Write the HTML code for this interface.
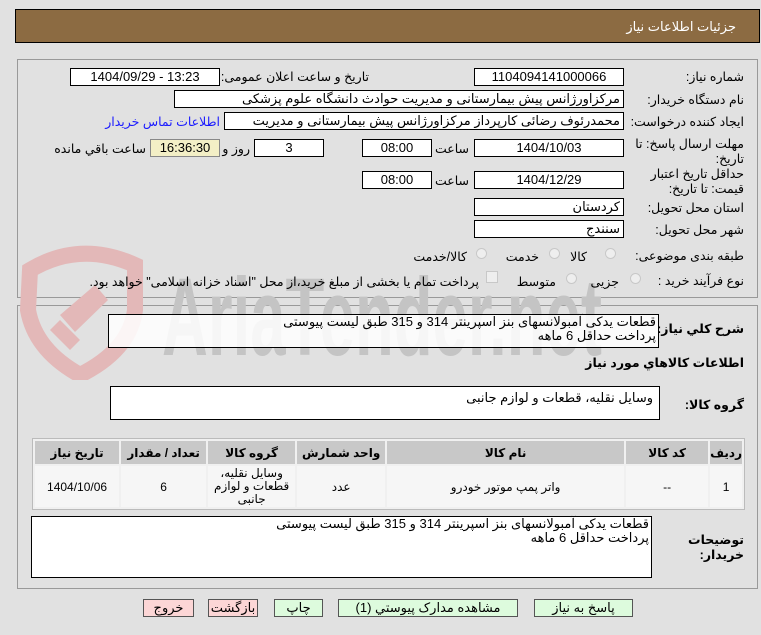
<!DOCTYPE html>
<html><head><meta charset="utf-8"><style>
body{margin:0;width:761px;height:635px;background:#e1e1e1;font-family:"Liberation Sans","DejaVu Sans",sans-serif;font-size:12px;color:#000;position:relative;overflow:hidden}
.a{position:absolute;white-space:nowrap}
.b{position:absolute;background:#fff;border:1px solid #000;box-sizing:border-box;text-align:center;line-height:16px;font-size:13px}
.l{position:absolute;direction:rtl;text-align:right;white-space:nowrap;font-size:12.5px}
.r{position:absolute;width:11px;height:11px;border-radius:50%;border:1px solid #c8c8c8;background:#eee;box-sizing:border-box}
.btn{position:absolute;top:599px;height:18px;border:1px solid #555;box-sizing:border-box;text-align:center;line-height:16px;font-size:13px}
table{border-collapse:separate;border-spacing:2px;position:absolute;left:32px;top:438px;width:713px;background:#f0f0f0;border:1px solid #bbb;direction:rtl}
th{background:#c8c8c8;height:23px;font-size:12px;font-weight:bold;padding:0}
td{background:#f6f6f6;height:41px;text-align:center;font-size:12px;padding:0}
</style></head><body>
<div class="a" style="left:15px;top:9px;width:745px;height:34px;background:#8c6b42;border:1px solid #000;box-sizing:border-box"></div>
<div class="l" style="right:25px;top:19px;color:#fff;font-size:13px">جزئیات اطلاعات نیاز</div>
<div class="a" style="left:17px;top:59px;width:741px;height:239px;border:1px solid #999;box-sizing:border-box"></div>
<div class="a" style="left:17px;top:305px;width:741px;height:284px;border:1px solid #999;box-sizing:border-box"></div>
<svg class="a" style="left:0;top:240px" width="620" height="140">
<path d="M30 30 Q80 0 135 25 L135 70 Q130 110 80 135 Q35 110 28 70 Z" fill="none" stroke="#e3b8b8" stroke-width="16"/>
<path d="M60 75 L95 45 L108 60 L75 92 Z M50 90 L70 110 L80 100 L60 80Z" fill="#e3b8b8"/>
<text x="162" y="115" font-size="110" font-weight="bold" fill="#c4c4c4" font-family="Liberation Sans" textLength="440" lengthAdjust="spacingAndGlyphs">AriaTender.net</text>
</svg>
<div class="l" style="right:17px;top:69px">شماره نیاز:</div>
<div class="b" style="left:474px;top:68px;width:150px;height:18px">1104094141000066</div>
<div class="l" style="right:392px;top:69px">تاریخ و ساعت اعلان عمومی:</div>
<div class="b" style="left:70px;top:68px;width:150px;height:18px">1404/09/29 - 13:23</div>
<div class="l" style="right:17px;top:92px">نام دستگاه خریدار:</div>
<div class="b" style="left:174px;top:90px;width:450px;height:18px;text-align:right;padding-right:3px;direction:rtl">مرکزاورژانس پیش بیمارستانی و مدیریت حوادث دانشگاه علوم پزشکی</div>
<div class="l" style="right:17px;top:114px">ایجاد کننده درخواست:</div>
<div class="b" style="left:224px;top:112px;width:400px;height:18px;text-align:right;padding-right:3px;direction:rtl;overflow:hidden">محمدرئوف رضائی کارپرداز مرکزاورژانس پیش بیمارستانی و مدیریت حوادث دانشگاه</div>
<div class="l" style="right:541px;top:114px;color:#1a1aff">اطلاعات تماس خریدار</div>
<div class="l" style="right:17px;top:137px;line-height:15px">مهلت ارسال پاسخ: تا<br>تاریخ:</div>
<div class="b" style="left:474px;top:139px;width:150px;height:18px">1404/10/03</div>
<div class="l" style="right:292px;top:141px">ساعت</div>
<div class="b" style="left:362px;top:139px;width:70px;height:18px">08:00</div>
<div class="b" style="left:254px;top:139px;width:70px;height:18px">3</div>
<div class="l" style="right:511px;top:141px">روز و</div>
<div class="b" style="left:150px;top:139px;width:70px;height:18px;background:#f3efc6;border-color:#888">16:36:30</div>
<div class="l" style="right:615px;top:141px">ساعت باقي مانده</div>
<div class="l" style="right:17px;top:167px;line-height:15px">حداقل تاریخ اعتبار<br>قیمت: تا تاریخ:</div>
<div class="b" style="left:474px;top:171px;width:150px;height:18px">1404/12/29</div>
<div class="l" style="right:292px;top:173px">ساعت</div>
<div class="b" style="left:362px;top:171px;width:70px;height:18px">08:00</div>
<div class="l" style="right:17px;top:200px">استان محل تحویل:</div>
<div class="b" style="left:474px;top:198px;width:150px;height:18px;text-align:right;padding-right:3px">کردستان</div>
<div class="l" style="right:17px;top:222px">شهر محل تحویل:</div>
<div class="b" style="left:474px;top:220px;width:150px;height:18px;text-align:right;padding-right:3px">سنندج</div>
<div class="l" style="right:17px;top:248px">طبقه بندی موضوعی:</div>
<div class="r" style="left:605px;top:248px"></div><div class="l" style="right:174px;top:249px">کالا</div>
<div class="r" style="left:549px;top:248px"></div><div class="l" style="right:222px;top:249px">خدمت</div>
<div class="r" style="left:476px;top:248px"></div><div class="l" style="right:294px;top:249px">کالا/خدمت</div>
<div class="l" style="right:17px;top:273px">نوع فرآیند خرید :</div>
<div class="r" style="left:630px;top:273px"></div><div class="l" style="right:142px;top:274px">جزیی</div>
<div class="r" style="left:566px;top:273px"></div><div class="l" style="right:205px;top:274px">متوسط</div>
<div class="a" style="left:486px;top:271px;width:12px;height:12px;border:1px solid #c8c8c8;background:#eee;box-sizing:border-box"></div>
<div class="l" style="right:282px;top:274px">پرداخت تمام یا بخشی از مبلغ خرید،از محل "اسناد خزانه اسلامی" خواهد بود.</div>
<div class="l" style="right:17px;top:321px;font-weight:bold">شرح کلي نياز:</div>
<div class="b" style="left:108px;top:314px;width:551px;height:34px;background:rgba(255,255,255,.85);text-align:right;padding-right:2px;line-height:14px;direction:rtl">قطعات یدکی آمبولانسهای بنز اسپرینتر 314 و 315 طبق لیست پیوستی<br>پرداخت حداقل 6 ماهه</div>
<div class="l" style="right:17px;top:355px;font-weight:bold">اطلاعات کالاهاي مورد نياز</div>
<div class="l" style="right:17px;top:397px;font-weight:bold">گروه کالا:</div>
<div class="b" style="left:110px;top:386px;width:550px;height:34px;text-align:right;padding-right:6px;padding-top:3px;direction:rtl">وسایل نقلیه، قطعات و لوازم جانبی</div>
<table><tr><th style="width:27px">ردیف</th><th style="width:82px">کد کالا</th><th style="width:237px">نام کالا</th><th style="width:88px">واحد شمارش</th><th style="width:87px">گروه کالا</th><th style="width:85px">تعداد / مقدار</th><th>تاریخ نیاز</th></tr>
<tr><td>1</td><td>--</td><td>واتر پمپ موتور خودرو</td><td>عدد</td><td style="line-height:13px">وسایل نقلیه،<br>قطعات و لوازم<br>جانبی</td><td>6</td><td>1404/10/06</td></tr></table>
<div class="l" style="right:17px;top:533px;font-weight:bold;line-height:15px">توضیحات<br>خریدار:</div>
<div class="b" style="left:31px;top:516px;width:621px;height:62px;text-align:right;padding-right:2px;line-height:14px;direction:rtl">قطعات یدکی آمبولانسهای بنز اسپرینتر 314 و 315 طبق لیست پیوستی<br>پرداخت حداقل 6 ماهه</div>
<div class="btn" style="left:143px;width:51px;background:#fcd6d6">خروج</div>
<div class="btn" style="left:208px;width:50px;background:#fcd6d6">بازگشت</div>
<div class="btn" style="left:274px;width:49px;background:#ddfbdd">چاپ</div>
<div class="btn" style="left:338px;width:180px;background:#ddfbdd">مشاهده مدارک پیوستي (1)</div>
<div class="btn" style="left:534px;width:99px;background:#ddfbdd">پاسخ به نیاز</div>
</body></html>
